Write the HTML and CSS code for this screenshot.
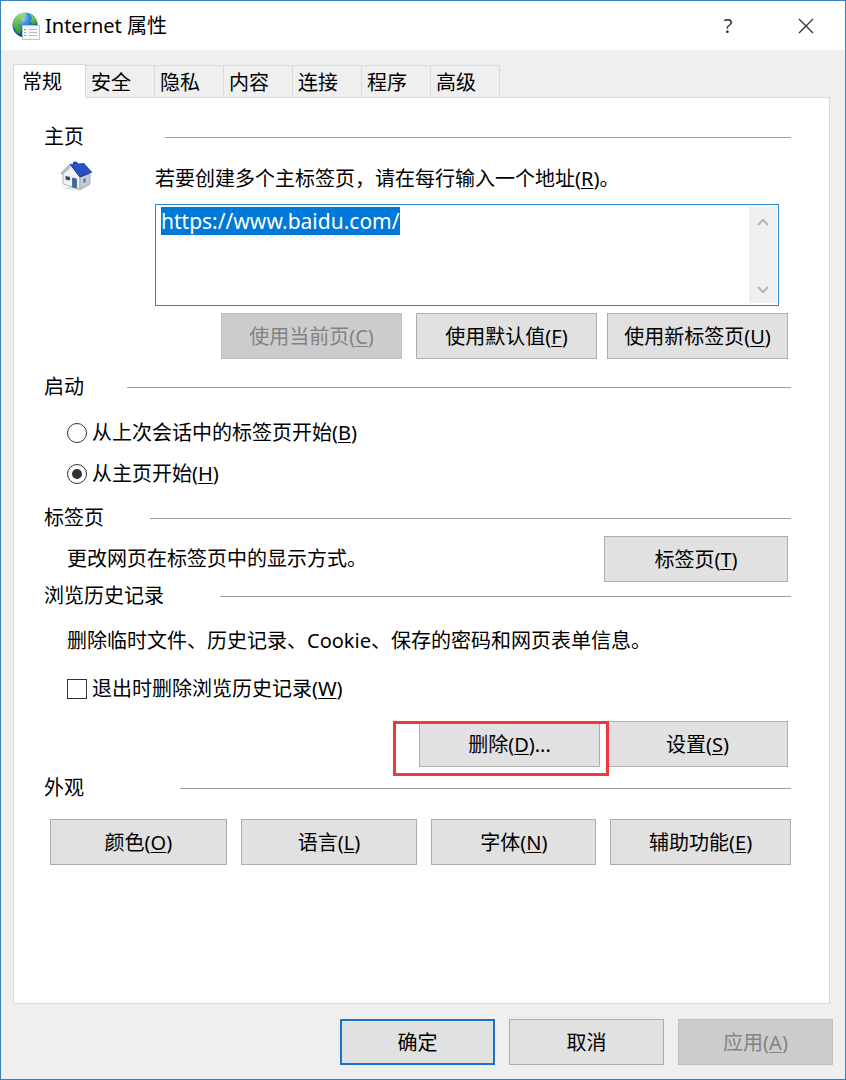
FILE: index.html
```html
<!DOCTYPE html>
<html lang="zh-CN">
<head>
    <meta charset="UTF-8">
    <meta name="viewport" content="width=device-width, initial-scale=1.0">
    <title>Internet 属性</title>
    <link rel="stylesheet" href="styles.css">
</head>
<body>
    <div class="window">
        <header class="title-bar">
            <svg class="title-icon" width="28" height="28" viewBox="0 0 28 28" aria-hidden="true">
                <defs>
                    <radialGradient id="globe" cx="0.35" cy="0.2" r="0.8">
                        <stop offset="0" stop-color="#b8e4fb"/>
                        <stop offset="0.4" stop-color="#2f8fdc"/>
                        <stop offset="1" stop-color="#0a2f8c"/>
                    </radialGradient>
                    <linearGradient id="land" x1="0" y1="0" x2="0" y2="1">
                        <stop offset="0" stop-color="#a5e070"/>
                        <stop offset="1" stop-color="#2b9a2c"/>
                    </linearGradient>
                </defs>
                <circle cx="13" cy="13" r="12.5" fill="url(#globe)"/>
                <path d="M3 6 Q8 0 14 1 L13 5 L9 7 L10 10 L6 13 L9 16 L8 22 L5 21 L2 15 L1 11 Z" fill="url(#land)"/>
                <path d="M18 2 Q24 5 25 11 L21 13 L18 9 L20 6 Z" fill="url(#land)"/>
                <rect x="10.5" y="13.5" width="17" height="14" fill="#f8f8f8" stroke="#c5c5c5"/>
                <path d="M17 17.5h8M17 20.5h8M17 23.5h8" stroke="#b5bcc6"/>
                <path d="M12 17.5h2M12 20.5h2M12 23.5h2" stroke="#69a5d8"/>
            </svg>
            <h1>Internet 属性</h1>
            <button class="title-btn" aria-label="帮助">?</button>
            <button class="title-btn" aria-label="关闭">
                <svg width="16" height="16" viewBox="0 0 16 16"><path d="M1 1l14 14M15 1L1 15" stroke="#333" stroke-width="1.3"/></svg>
            </button>
        </header>

        <div class="tabs" role="tablist">
            <button class="tab active" role="tab" aria-selected="true">常规</button>
            <button class="tab" role="tab">安全</button>
            <button class="tab" role="tab">隐私</button>
            <button class="tab" role="tab">内容</button>
            <button class="tab" role="tab">连接</button>
            <button class="tab" role="tab">程序</button>
            <button class="tab" role="tab">高级</button>
        </div>

        <main class="panel">
            <section>
                <h2 class="legend legend-home">主页</h2>
                <div class="home">
                    <svg class="home-icon" width="32" height="32" viewBox="0 0 32 32" aria-hidden="true">
                        <path d="M2 28 L20 31 L30 25 L24 24 Z" fill="#d7e3d2"/>
                        <path d="M13 5 L13 2 L16 1.500 L18 3 L18 7 Z" fill="#27429a"/>
                        <path d="M3 13 L11 5 L20 17 L20 29 L3 24 Z" fill="#eef2f5" stroke="#8d9cab" stroke-width="0.7"/>
                        <path d="M20 17 L30 14 L30 24 L20 29 Z" fill="#c3ced9" stroke="#8d9cab" stroke-width="0.7"/>
                        <path d="M10 4 L24 3 L32 12 L20 17 Z" fill="#2c50c4"/>
                        <path d="M10 4 L20 17 L32 12" fill="none" stroke="#1a2f85" stroke-width="1"/>
                        <path d="M10 4 L1 13 L2 14.500 L10.500 7" fill="#b9c5d1" stroke="#7b8b9a" stroke-width="0.6"/>
                        <path d="M5.500 16 L10 17 L10 20.500 L5.500 19.500 Z" fill="#3b4450"/>
                        <path d="M12.500 18 L16.500 19 L16.500 28 L12.500 27 Z" fill="#3c6a9c" stroke="#28456a" stroke-width="0.6"/>
                        <path d="M23 19 L26 18 L26 22 L23 23 Z" fill="#7c8c9f"/>
                    </svg>
                    <div class="home-content">
                        <label for="homeUrls">若要创建多个主标签页，请在每行输入一个地址(<u>R</u>)。</label>
                        <div class="url-box">
                            <textarea id="homeUrls" spellcheck="false">https://www.baidu.com/</textarea>
                            <div class="scrollbar" aria-hidden="true">
                                <svg width="12" height="8" viewBox="0 0 12 8"><path d="M1 7l5-5 5 5" fill="none" stroke="#b4b4b4" stroke-width="2"/></svg>
                                <svg width="12" height="8" viewBox="0 0 12 8"><path d="M1 1l5 5 5-5" fill="none" stroke="#b4b4b4" stroke-width="2"/></svg>
                            </div>
                        </div>
                    </div>
                </div>
                <div class="btn-row home-buttons">
                    <button class="btn btn-current" disabled>使用当前页(<u>C</u>)</button>
                    <button class="btn">使用默认值(<u>F</u>)</button>
                    <button class="btn">使用新标签页(<u>U</u>)</button>
                </div>
            </section>

            <section>
                <h2 class="legend legend-startup">启动</h2>
                <div class="options">
                    <label class="option"><input type="radio" name="startup"><span>从上次会话中的标签页开始(<u>B</u>)</span></label>
                    <label class="option"><input type="radio" name="startup" checked><span>从主页开始(<u>H</u>)</span></label>
                </div>
            </section>

            <section>
                <h2 class="legend legend-tabs">标签页</h2>
                <div class="tab-settings">
                    <p>更改网页在标签页中的显示方式。</p>
                    <button class="btn">标签页(<u>T</u>)</button>
                </div>
            </section>

            <section>
                <h2 class="legend legend-history">浏览历史记录</h2>
                <div class="history">
                    <p>删除临时文件、历史记录、Cookie、保存的密码和网页表单信息。</p>
                    <label class="option"><input type="checkbox"><span>退出时删除浏览历史记录(<u>W</u>)</span></label>
                </div>
                <div class="btn-row history-buttons">
                    <div class="highlight">
                        <button class="btn">删除(<u>D</u>)...</button>
                    </div>
                    <button class="btn">设置(<u>S</u>)</button>
                </div>
            </section>

            <section>
                <h2 class="legend legend-appearance">外观</h2>
                <div class="appearance">
                    <button class="btn">颜色(<u>O</u>)</button>
                    <button class="btn">语言(<u>L</u>)</button>
                    <button class="btn">字体(<u>N</u>)</button>
                    <button class="btn">辅助功能(<u>E</u>)</button>
                </div>
            </section>
        </main>

        <footer class="dialog-buttons">
            <button class="btn btn-default">确定</button>
            <button class="btn">取消</button>
            <button class="btn" disabled>应用(<u>A</u>)</button>
        </footer>
    </div>

    <script>
        // Address list opens with its text selected
        const homeUrls = document.getElementById('homeUrls');
        homeUrls.focus();
        homeUrls.select();
    </script>
</body>
</html>
```
FILE: styles.css
```css
* {
    box-sizing: border-box;
}

body {
    margin: 0;
    font-family: "Noto Sans", "Noto Sans CJK SC", sans-serif;
    font-size: 20px;
    line-height: 28px;
    color: #000;
}

button, textarea {
    font: inherit;
    color: inherit;
}

h1, h2, p {
    margin: 0;
    font-size: 20px;
    font-weight: 400;
}

u {
    text-decoration-thickness: 1px;
    text-underline-offset: 2px;
}

.window {
    display: flex;
    flex-direction: column;
    min-height: 100vh;
    background: #efefef;
    border: 1px solid #3c7fb5;
}

/* Title bar */
.title-bar {
    display: flex;
    align-items: center;
    height: 49px;
    padding-left: 11px;
    background: #fff;
}

.title-bar h1 {
    flex: 1;
    margin-left: 5px;
}

.title-btn {
    display: flex;
    align-items: center;
    justify-content: center;
    width: 78px;
    height: 48px;
    padding: 0;
    border: none;
    background: none;
    color: #333;
}

/* Tabs */
.tabs {
    display: flex;
    align-items: flex-end;
    margin: 14px 0 0 12px;
}

.tab {
    width: 69px;
    height: 32px;
    padding: 2px 0 0 5px;
    border: 1px solid #dadada;
    border-width: 1px 1px 0 0;
    background: #efefef;
    text-align: left;
}

.tab.active {
    position: relative;
    width: 73px;
    height: 34px;
    margin-bottom: -1px;
    padding: 0 0 0 8px;
    border-left-width: 1px;
    background: #fff;
}

.panel {
    flex: 1;
    margin: 0 15px 0 12px;
    padding: 25px 38px 0 30px;
    border: 1px solid #dadada;
    background: #fff;
}

/* Section headings with a rule on the right */
.legend {
    display: flex;
    align-items: center;
}

.legend::after {
    content: "";
    flex: 1;
    height: 1px;
    background: #a0a0a0;
}

.legend-home::after { margin-left: 81px; }
.legend-startup::after { margin-left: 43px; }
.legend-tabs::after { margin-left: 46px; }
.legend-history::after { margin-left: 56px; }
.legend-appearance::after { margin-left: 96px; }

/* Buttons */
.btn {
    width: 181px;
    height: 46px;
    padding: 2px 0 0;
    border: 1px solid #adadad;
    background: #e1e1e1;
}

.btn:hover:enabled {
    background: #e5f1fb;
    border-color: #0078d7;
}

.btn:disabled {
    background: #ccc;
    border-color: #bfbfbf;
    color: #838383;
}

.btn-row {
    display: flex;
    justify-content: flex-end;
    padding-right: 3px;
}

/* Home page */
.home {
    display: flex;
    margin-top: 14px;
    padding: 0 12px 0 16px;
}

.home-icon {
    flex: none;
    margin-top: -5px;
}

.home-content {
    flex: 1;
    margin-left: 63px;
}

.home-content label {
    display: block;
}

.url-box {
    display: flex;
    height: 102px;
    margin-top: 11px;
    padding: 2px 1px 2px 5px;
    border: 1px solid #2b85d2;
}

.url-box textarea {
    flex: 1;
    padding: 0;
    border: none;
    outline: none;
    resize: none;
    overflow: hidden;
    font-size: 21px;
}

.url-box textarea::selection {
    background: #0078d7;
    color: #fff;
}

.scrollbar {
    display: flex;
    flex-direction: column;
    align-items: center;
    justify-content: space-between;
    width: 28px;
    padding: 11px 0 9px;
    background: #efefef;
}

.home-buttons {
    gap: 10px;
    margin-top: 7px;
}

.btn-current {
    margin-right: 4px;
}

.legend-startup {
    margin-top: 14px;
}

/* Radio buttons and check boxes */
.options {
    display: flex;
    flex-direction: column;
    align-items: flex-start;
    gap: 13px;
    margin-top: 18px;
    padding-left: 23px;
}

.option {
    display: flex;
    align-items: center;
    gap: 5px;
}

.option input {
    appearance: none;
    width: 20px;
    height: 20px;
    margin: 0;
    border: 1px solid #333;
    background: #fff;
}

.option input[type="radio"] {
    border-radius: 50%;
}

.option input[type="radio"]:checked {
    padding: 4px;
    background: #333 content-box;
}

.option input[type="checkbox"]:checked {
    background: #333 content-box;
    padding: 3px;
}

/* Tabs section */
.legend-tabs {
    margin-top: 16px;
}

.tab-settings {
    display: flex;
    align-items: center;
    justify-content: space-between;
    margin-top: 4px;
    padding: 0 3px 0 23px;
}

.tab-settings .btn {
    width: 184px;
}

/* Browsing history */
.history {
    display: flex;
    flex-direction: column;
    align-items: flex-start;
    gap: 20px;
    margin-top: 17px;
    padding-left: 23px;
}

.history-buttons {
    gap: 7px;
    margin-top: 18px;
}

.highlight {
    position: relative;
}

.highlight::after {
    content: "";
    position: absolute;
    top: 0;
    right: -9px;
    bottom: -9px;
    left: -26px;
    border: 3px solid #ee3a3e;
    pointer-events: none;
}

/* Appearance */
.legend-appearance {
    margin-top: 7px;
}

.appearance {
    display: grid;
    grid-template-columns: 177fr 177fr 165fr 181fr;
    gap: 14px;
    margin-top: 17px;
    padding-left: 6px;
}

.appearance .btn {
    width: auto;
}

.dialog-buttons {
    display: flex;
    justify-content: flex-end;
    gap: 14px;
    padding: 15px 12px 14px;
}

.dialog-buttons .btn {
    width: 155px;
}

.btn-default {
    border: 2px solid #1a73c7;
}
```
